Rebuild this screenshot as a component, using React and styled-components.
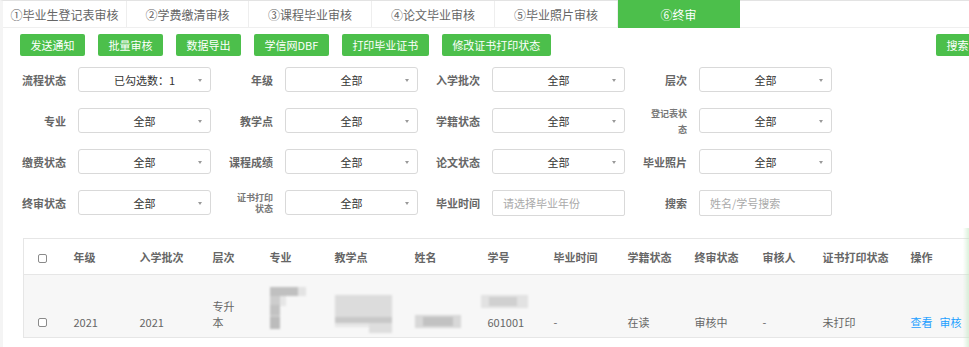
import React from "react";
import styled, { createGlobalStyle, css } from "styled-components";

const Global = createGlobalStyle`
  html, body { margin: 0; padding: 0; overflow: hidden; background: #fff; }
  body { font-family: "Noto Sans CJK SC", "Noto Sans", sans-serif; color: #333; }
  * { box-sizing: border-box; }
`;

const GREEN = "#4cbf4b";

const Page = styled.div`
  width: 990px;
  min-height: 347px;
  border-top: 1px solid #e3e3e3;
  border-left: 3px solid #f4f4f4;
  background: #fff;
`;

const TabBar = styled.div`
  display: flex;
  height: 27px;
  border-bottom: 1px solid #efefef;
`;

const Tab = styled.div`
  flex: 0 0 ${(p) => p.$w}px;
  display: flex;
  align-items: center;
  justify-content: center;
  font-size: 12px;
  color: #666;
  border-right: 1px solid #eeeeee;
  white-space: nowrap;
  ${(p) =>
    p.$active &&
    css`
      background: ${GREEN};
      color: #fff;
      border-right-color: ${GREEN};
      margin-top: -1px;
      height: 28px;
    `}
`;

const Toolbar = styled.div`
  display: flex;
  gap: 13px;
  margin: 6px 11px 0 17px;
`;

const Button = styled.button`
  height: 22px;
  padding: 0 10.5px;
  border: none;
  border-radius: 2px;
  background: ${GREEN};
  color: #fff;
  font-family: inherit;
  font-size: 11px;
  line-height: 22px;
  white-space: nowrap;
  ${(p) => p.$push && css`margin-left: auto;`}
`;

const FilterGrid = styled.div`
  display: grid;
  grid-template-columns: repeat(4, 200px);
  column-gap: 7px;
  row-gap: 16px;
  margin: 11px 0 0 8px;
`;

const Field = styled.div`
  display: flex;
  align-items: center;
  gap: 12px;
  height: 25px;
`;

const Label = styled.div`
  flex: 0 0 55px;
  text-align: right;
  font-size: 11px;
  font-weight: 700;
  color: #666;
  white-space: nowrap;
`;

const SmallLabel = styled.div`
  flex: 0 0 55px;
  display: flex;
  justify-content: flex-end;
  font-size: 9px;
  font-weight: 700;
  color: #777;
  line-height: ${(p) => p.$lh}px;
  margin-top: ${(p) => p.$shift || 0}px;
  span {
    max-width: 38px;
    text-align: right;
  }
`;

const Select = styled.div`
  position: relative;
  flex: 0 0 133px;
  height: 25px;
  border: 1px solid #d9d9d9;
  border-radius: 3px;
  display: flex;
  align-items: center;
  justify-content: center;
  font-size: 11px;
  color: #333;
  background: #fff;
`;

const Caret = styled.span`
  position: absolute;
  right: 8px;
  top: 11px;
  width: 0;
  height: 0;
  border-left: 2.5px solid transparent;
  border-right: 2.5px solid transparent;
  border-top: 3px solid #999;
`;

const Input = styled.div`
  flex: 0 0 133px;
  height: 26px;
  border: 1px solid #d9d9d9;
  border-radius: 2px;
  display: flex;
  align-items: center;
  padding-left: 10px;
  font-size: 11px;
  color: #aaa;
  background: #fff;
`;

const TableWrap = styled.div`
  margin: 23px 0 0 20px;
`;

const Table = styled.table`
  border-collapse: collapse;
  table-layout: fixed;
  width: 947px;
  border-top: 1px solid #e6e6e6;
  border-left: 1px solid #e6e6e6;
`;

const Col = styled.col`
  width: ${(p) => p.$w}px;
`;

const Th = styled.th`
  height: 36px;
  padding: 0 0 0 ${(p) => (p.$check ? 14 : 10)}px;
  text-align: left;
  font-size: 11px;
  font-weight: 700;
  color: #666;
  white-space: nowrap;
  border-bottom: 1px solid #e6e6e6;
`;

const BodyRow = styled.tr`
  height: 63px;
  background: #f7f7f7;
`;

const Td = styled.td`
  padding: 0 0 7px ${(p) => (p.$check ? 14 : 10)}px;
  vertical-align: bottom;
  font-size: 11px;
  line-height: 16px;
  color: #666;
  border-bottom: 1px solid #e6e6e6;
`;

const Check = styled.span`
  display: inline-block;
  width: 9px;
  height: 9px;
  border: 1px solid #8a8a8a;
  border-radius: 2px;
  vertical-align: middle;
  background: #fff;
  margin-bottom: ${(p) => p.$mb || 0}px;
`;

const Wrap = styled.span`
  display: inline-block;
  width: 24px;
`;

const Mosaic = styled.svg`
  display: block;
  filter: blur(1.1px);
  margin-left: ${(p) => p.$ml || 0}px;
  margin-bottom: ${(p) => p.$mb || 0}px;
`;

const Links = styled.div`
  display: flex;
  gap: 7px;
`;

const Link = styled.span`
  color: #1e9fff;
`;

const EdgeShade = styled.div`
  position: fixed;
  right: 0;
  top: 228px;
  bottom: 0;
  width: 6px;
  background: linear-gradient(to right, rgba(255, 255, 255, 0), rgba(190, 230, 190, 0.55));
  pointer-events: none;
`;

const tabs = [
  ["①毕业生登记表审核", 124],
  ["②学费缴清审核", 122],
  ["③课程毕业审核", 123],
  ["④论文毕业审核", 123],
  ["⑤毕业照片审核", 123],
  ["⑥终审", 122],
];

const buttons = ["发送通知", "批量审核", "数据导出", "学信网DBF", "打印毕业证书", "修改证书打印状态"];

const filters = [
  { label: "流程状态", value: "已勾选数：1" },
  { label: "年级", value: "全部" },
  { label: "入学批次", value: "全部" },
  { label: "层次", value: "全部" },
  { label: "专业", value: "全部" },
  { label: "教学点", value: "全部" },
  { label: "学籍状态", value: "全部" },
  { label: "登记表状态", small: true, lh: 16, shift: 3, value: "全部" },
  { label: "缴费状态", value: "全部" },
  { label: "课程成绩", value: "全部" },
  { label: "论文状态", value: "全部" },
  { label: "毕业照片", value: "全部" },
  { label: "终审状态", value: "全部" },
  { label: "证书打印状态", small: true, lh: 11, value: "全部" },
  { label: "毕业时间", input: "请选择毕业年份" },
  { label: "搜索", input: "姓名/学号搜索" },
];

const cols = [40, 66, 73, 57, 65, 80, 73, 66, 74, 67, 68, 60, 88, 70];
const heads = ["年级", "入学批次", "层次", "专业", "教学点", "姓名", "学号", "毕业时间", "学籍状态", "终审状态", "审核人", "证书打印状态", "操作"];

function MajorMosaic() {
  return (
    <Mosaic width="36" height="42" viewBox="0 0 36 42" $mb={1}>
      <rect x="0" y="0" width="28" height="9" fill="#c0c0c0" />
      <rect x="28" y="0" width="8" height="9" fill="#e3e3e3" />
      <rect x="0" y="9" width="10" height="33" fill="#cdcdcd" />
      <rect x="0" y="18" width="10" height="10" fill="#c2c2c2" />
      <rect x="0" y="30" width="10" height="12" fill="#bcbcbc" />
      <rect x="10" y="9" width="6" height="10" fill="#e6e6e6" />
    </Mosaic>
  );
}

function SiteMosaic() {
  return (
    <Mosaic width="57" height="38" viewBox="0 0 57 38" $mb={-3}>
      <rect x="0" y="0" width="57" height="22" fill="#dcdcdc" />
      <rect x="0" y="22" width="57" height="6" fill="#c8c8c8" />
      <rect x="0" y="28" width="34" height="4" fill="#e6e6e6" />
      <rect x="34" y="28" width="23" height="10" fill="#dedede" />
    </Mosaic>
  );
}

function NameMosaic() {
  return (
    <Mosaic width="46" height="13" viewBox="0 0 46 13" $mb={2}>
      <rect x="0" y="0" width="46" height="13" fill="#d8d8d8" />
      <rect x="8" y="2" width="30" height="9" fill="#c2c2c2" />
    </Mosaic>
  );
}

function IdMosaic() {
  return (
    <Mosaic width="47" height="13" viewBox="0 0 47 13" $ml={-7} $mb={6}>
      <rect x="0" y="0" width="47" height="13" fill="#e2e2e2" />
      <rect x="8" y="2" width="28" height="9" fill="#d0d0d0" />
    </Mosaic>
  );
}

export default function App() {
  return (
    <>
      <Global />
      <Page>
        <TabBar>
          {tabs.map(([t, w], i) => (
            <Tab key={t} $w={w} $active={i === 5}>
              {t}
            </Tab>
          ))}
        </TabBar>

        <Toolbar>
          {buttons.map((b) => (
            <Button key={b}>{b}</Button>
          ))}
          <Button $push>搜索</Button>
        </Toolbar>

        <FilterGrid>
          {filters.map((f) => (
            <Field key={f.label}>
              {f.small ? (
                <SmallLabel $lh={f.lh} $shift={f.shift}>
                  <span>{f.label}</span>
                </SmallLabel>
              ) : (
                <Label>{f.label}</Label>
              )}
              {f.input ? (
                <Input>{f.input}</Input>
              ) : (
                <Select>
                  {f.value}
                  <Caret />
                </Select>
              )}
            </Field>
          ))}
        </FilterGrid>

        <TableWrap>
          <Table>
            <colgroup>
              {cols.map((w, i) => (
                <Col key={i} $w={w} />
              ))}
            </colgroup>
            <thead>
              <tr>
                <Th $check>
                  <Check />
                </Th>
                {heads.map((h) => (
                  <Th key={h}>{h}</Th>
                ))}
              </tr>
            </thead>
            <tbody>
              <BodyRow>
                <Td $check>
                  <Check $mb={3} />
                </Td>
                <Td>2021</Td>
                <Td>2021</Td>
                <Td>
                  <Wrap>专升本</Wrap>
                </Td>
                <Td>
                  <MajorMosaic />
                </Td>
                <Td>
                  <SiteMosaic />
                </Td>
                <Td>
                  <NameMosaic />
                </Td>
                <Td>
                  <IdMosaic />
                  601001
                </Td>
                <Td>-</Td>
                <Td>在读</Td>
                <Td>审核中</Td>
                <Td>-</Td>
                <Td>未打印</Td>
                <Td>
                  <Links>
                    <Link>查看</Link>
                    <Link>审核</Link>
                  </Links>
                </Td>
              </BodyRow>
            </tbody>
          </Table>
        </TableWrap>
      </Page>
      <EdgeShade />
    </>
  );
}
